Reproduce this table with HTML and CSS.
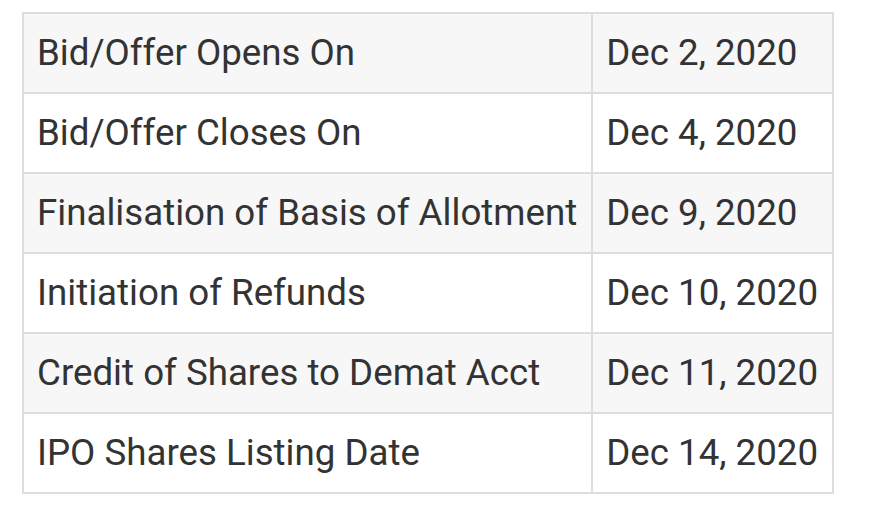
FILE: index.html
```html
<!DOCTYPE html>
<html>
<head>
<meta charset="utf-8">
<link rel="stylesheet" href="styles.css">
</head>
<body>
<table class="ipo">
<tbody>
<tr><td>Bid/Offer Opens On</td><td>Dec 2, 2020</td></tr>
<tr><td>Bid/Offer Closes On</td><td>Dec 4, 2020</td></tr>
<tr><td>Finalisation of Basis of Allotment</td><td>Dec 9, 2020</td></tr>
<tr><td>Initiation of Refunds</td><td>Dec 10, 2020</td></tr>
<tr><td>Credit of Shares to Demat Acct</td><td>Dec 11, 2020</td></tr>
<tr><td>IPO Shares Listing Date</td><td>Dec 14, 2020</td></tr>
</tbody>
</table>
</body>
</html>
```
FILE: styles.css
```css
html, body {
  margin: 0;
  background: #fff;
}
body {
  padding: 12px 0 0 22px;
  font-family: Roboto, "Noto Sans", sans-serif;
  color: #333;
}
.ipo {
  border-collapse: collapse;
  font-size: 36.7px;
}
.ipo td {
  border: 2px solid #ddd;
  height: 78px;
  padding: 0 14px 0 13px;
  line-height: 1;
  white-space: nowrap;
}
.ipo tr:nth-child(odd) td {
  background: #f7f7f7;
}
```
